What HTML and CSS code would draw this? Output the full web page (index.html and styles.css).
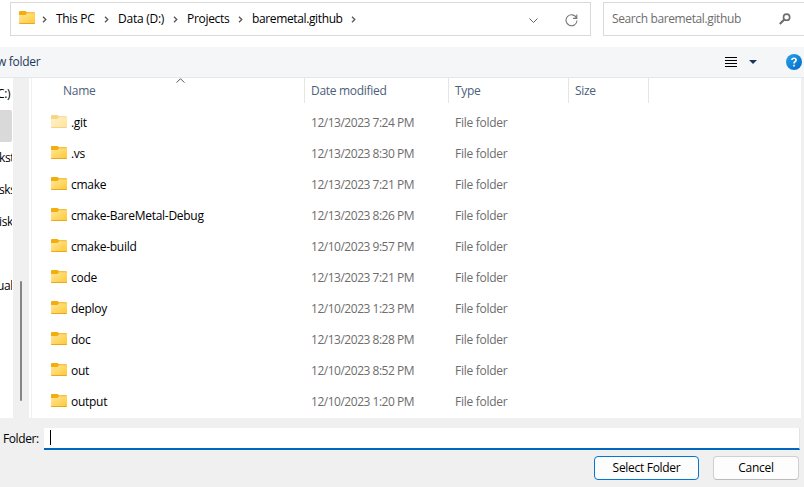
FILE: index.html
```
<!DOCTYPE html>
<html lang="en">
<head>
<meta charset="utf-8">
<title>Select Folder</title>
<link rel="stylesheet" href="styles.css">
</head>
<body>
<svg class="defs" width="0" height="0">
  <defs>
    <linearGradient id="front" x1="0" y1="0" x2="1" y2="1">
      <stop offset="0" stop-color="#ffe79c"/><stop offset="1" stop-color="#ffc832"/>
    </linearGradient>
    <linearGradient id="blue" x1="0" y1="0" x2="1" y2="1">
      <stop offset="0" stop-color="#2aa4ea"/><stop offset="1" stop-color="#0068c8"/>
    </linearGradient>
    <symbol id="folder" viewBox="0 0 16 13">
      <path d="M0 1Q0 0 1 0H6.5L8 1.2H15Q16 1.2 16 2.2V5H0Z" fill="#f2ae0c"/>
      <path d="M0 4H6.5L8 2.3H16V12Q16 13 15 13H1Q0 13 0 12Z" fill="url(#front)"/>
      <path d="M0 12H16Q16 13 15 13H1Q0 13 0 12Z" fill="#e8a820"/>
    </symbol>
    <symbol id="chev" viewBox="0 0 5 7"><path d="M1 .7L3.8 3.5L1 6.3" fill="none" stroke="#555" stroke-width="1.3"/></symbol>
  </defs>
</svg>
<div class="dialog">
  <header class="nav">
    <div class="address">
      <svg class="address-icon"><use href="#folder"/></svg>
      <svg class="chev c0"><use href="#chev"/></svg>
      <span class="crumb k1">This PC</span><svg class="chev"><use href="#chev"/></svg>
      <span class="crumb k2">Data (D:)</span><svg class="chev"><use href="#chev"/></svg>
      <span class="crumb k3">Projects</span><svg class="chev"><use href="#chev"/></svg>
      <span class="crumb k4">baremetal.github</span><svg class="chev"><use href="#chev"/></svg>
      <svg class="drop" viewBox="0 0 9 5"><path d="M.5 .5L4.5 4.5L8.5 .5" fill="none" stroke="#666"/></svg>
      <svg class="refresh" viewBox="0 0 13 13"><path d="M11.6 4.2A5.5 5.5 0 1 0 12 6.5M11.8 .5V4.4H8" fill="none" stroke="#777" stroke-width="1.1"/></svg>
    </div>
    <div class="search">
      <span class="hint">Search baremetal.github</span>
      <svg class="lens" viewBox="0 0 12 12"><circle cx="7.6" cy="4.2" r="3.1" fill="none" stroke="#6b6b6b" stroke-width="1.6"/><path d="M5.3 6.5L.8 11" stroke="#6b6b6b" stroke-width="2"/></svg>
    </div>
  </header>
  <div class="toolbar">
    <span class="new">w folder</span>
    <svg class="view" viewBox="0 0 12 10"><path d="M0 .5H12M0 3.5H12M0 6.5H12M0 9.5H12" stroke="#000"/></svg>
    <svg class="caret" viewBox="0 0 8 4"><path d="M0 0H8L4 4Z" fill="#1b365d"/></svg>
    <svg class="help" viewBox="0 0 16 16"><circle cx="8" cy="8" r="8" fill="url(#blue)"/><path d="M5.9 6.1Q5.9 4.2 8 4.2T10.1 6.1Q10.1 7.1 9 7.7Q8 8.3 8 9.6M8 10.8V12.4" fill="none" stroke="#fff" stroke-width="1.6"/></svg>
  </div>
  <main class="content">
    <nav class="tree">
      <div class="node n0">C:)</div>
      <div class="node selected"></div>
      <div class="node n2">kst</div>
      <div class="node n3">sks</div>
      <div class="node n4">isk</div>
      <div class="node"></div>
      <div class="node n6">ual</div>
    </nav>
    <div class="scroll"><div class="thumb"></div></div>
    <section class="files">
      <div class="row head">
        <div class="name">Name<svg class="sort" viewBox="0 0 9 5"><path d="M.6 4.6L4.5 .7L8.4 4.6" fill="none" stroke="#555"/></svg></div>
        <div class="date">Date modified</div><div class="type">Type</div><div class="size">Size</div>
      </div>
      <div class="row faded"><div class="name"><svg><use href="#folder"/></svg><span>.git</span></div><div class="date">12/13/2023 7:24 PM</div><div class="type">File folder</div></div>
      <div class="row"><div class="name"><svg><use href="#folder"/></svg><span>.vs</span></div><div class="date">12/13/2023 8:30 PM</div><div class="type">File folder</div></div>
      <div class="row"><div class="name"><svg><use href="#folder"/></svg><span>cmake</span></div><div class="date">12/13/2023 7:21 PM</div><div class="type">File folder</div></div>
      <div class="row"><div class="name"><svg><use href="#folder"/></svg><span>cmake-BareMetal-Debug</span></div><div class="date">12/13/2023 8:26 PM</div><div class="type">File folder</div></div>
      <div class="row"><div class="name"><svg><use href="#folder"/></svg><span>cmake-build</span></div><div class="date">12/10/2023 9:57 PM</div><div class="type">File folder</div></div>
      <div class="row"><div class="name"><svg><use href="#folder"/></svg><span>code</span></div><div class="date">12/13/2023 7:21 PM</div><div class="type">File folder</div></div>
      <div class="row"><div class="name"><svg><use href="#folder"/></svg><span>deploy</span></div><div class="date">12/10/2023 1:23 PM</div><div class="type">File folder</div></div>
      <div class="row"><div class="name"><svg><use href="#folder"/></svg><span>doc</span></div><div class="date">12/13/2023 8:28 PM</div><div class="type">File folder</div></div>
      <div class="row"><div class="name"><svg><use href="#folder"/></svg><span>out</span></div><div class="date">12/10/2023 8:52 PM</div><div class="type">File folder</div></div>
      <div class="row"><div class="name"><svg><use href="#folder"/></svg><span>output</span></div><div class="date">12/10/2023 1:20 PM</div><div class="type">File folder</div></div>
    </section>
  </main>
  <footer class="footer">
    <div class="field"><span class="label">Folder:</span><div class="input"><i class="cursor"></i></div></div>
    <div class="actions"><div class="btn primary"><span>Select Folder</span></div><div class="btn"><span>Cancel</span></div></div>
  </footer>
</div>
</body>
</html>
```
FILE: styles.css
```
* { box-sizing: border-box; }
body { margin: 0; background: #fff; }
svg { display: block; flex: none; }
.defs { position: absolute; }
.dialog { width: 804px; height: 487px; overflow: hidden; display: flex; flex-direction: column; font: 12px/16px "Open Sans", sans-serif; color: #000; white-space: nowrap; }
.nav { height: 47px; flex: none; padding: 2px 0 0 10px; display: flex; gap: 12px; }
.address, .search { height: 34px; border: 1px solid #d9d9d9; display: flex; align-items: center; }
.address { width: 581px; flex: none; padding-left: 8px; }
.address-icon { width: 16px; height: 13px; margin-top: -3px; }
.chev { width: 5px; height: 7px; margin-top: 1px; }
.c0 { margin: 1px 9px 0 7px; }
.crumb { flex: none; }
.k1 { width: 48px; letter-spacing: -.3px; }
.k2 { width: 55px; margin-left: 9px; letter-spacing: -.25px; }
.k3 { width: 51px; margin-left: 9px; letter-spacing: -.3px; }
.k4 { width: 99px; margin-left: 9px; letter-spacing: -.37px; }
.drop { width: 9px; height: 5px; margin: 3px 0 0 auto; }
.refresh { width: 13px; height: 13px; margin: 2px 12px 0 27px; }
.search { width: 210px; flex: none; padding-left: 8px; }
.hint { color: #6d6d6d; width: 167px; letter-spacing: -.38px; }
.lens { width: 12px; height: 12px; }
.toolbar { height: 31px; flex: none; background: #f4f6f8; border-bottom: 1px solid #e5e8eb; display: flex; align-items: center; color: #1e395b; }
.new { width: 727px; margin-left: -3px; letter-spacing: -.28px; }
.view { width: 12px; height: 10px; margin: 0 12px 0 1px; }
.caret { width: 8px; height: 4px; margin-right: 29px; }
.help { width: 16px; height: 16px; margin-top: -1px; }
.content { height: 340px; flex: none; display: flex; background: #f0f0f0; }
.tree { width: 13px; background: #fff; overflow: hidden; padding-right: 1px; }
.node { height: 32px; width: 12px; overflow: hidden; line-height: 32px; letter-spacing: -.4px; }
.n0 { text-indent: -3px; }
.n2 { text-indent: -1px; }
.n3, .n4 { text-indent: -1px; }
.n6 { text-indent: -3px; }
.selected { background: #d9d9d9; border-radius: 0 2px 2px 0; }
.scroll { width: 16px; padding: 203px 0 0 7px; }
.thumb { width: 2px; height: 120px; background: #868686; border-radius: 1px; }
.files { width: 772px; background: #fff; border-left: 2px solid #fff; box-shadow: inset 1px 0 #f0f0f0; }
.row { display: flex; height: 31px; line-height: 31px; color: #6d6d6d; }
.head { height: 25px; margin-bottom: 4px; line-height: 25px; color: #4c607a; }
.name { width: 274px; display: flex; align-items: center; padding-left: 20px; color: #000; letter-spacing: -.28px; }
.name svg { width: 16px; height: 13px; margin: -2px 4px 0 0; }
.head .name { position: relative; color: #4c607a; padding-left: 32px; border-right: 1px solid #e5e5e5; }
.head .name .sort { position: absolute; left: 145px; top: 0; width: 9px; height: 5px; margin: 0; }
.date { width: 144px; padding-left: 6px; letter-spacing: -.48px; }
.type { width: 120px; padding-left: 6px; letter-spacing: -.27px; }
.size { width: 80px; padding-left: 6px; }
.head .date, .head .type, .head .size { border-right: 1px solid #e5e5e5; letter-spacing: -.3px; }
.faded svg { opacity: .5; }
.footer { flex: 1; background: #f0f0f0; padding: 10px 4px 0 3px; }
.field { display: flex; height: 22px; align-items: center; }
.label { width: 41px; flex: none; letter-spacing: -.4px; }
.input { width: 756px; height: 22px; background: #fff; border-bottom: 2px solid #0067c0; border-right: 1px solid #e0e4e8; padding: 2px 0 0 6px; }
.cursor { display: block; width: 1px; height: 15px; background: #000; }
.actions { display: flex; justify-content: flex-end; gap: 14px; margin: 6px 1px 0 0; }
.btn { width: 86px; height: 24px; border: 1px solid #d0d0d0; border-bottom-color: #bbb; border-radius: 4px; background: #fdfdfd; display: flex; align-items: center; justify-content: center; letter-spacing: -.3px; }
.primary { width: 105px; border-color: #0078d4; }
```
